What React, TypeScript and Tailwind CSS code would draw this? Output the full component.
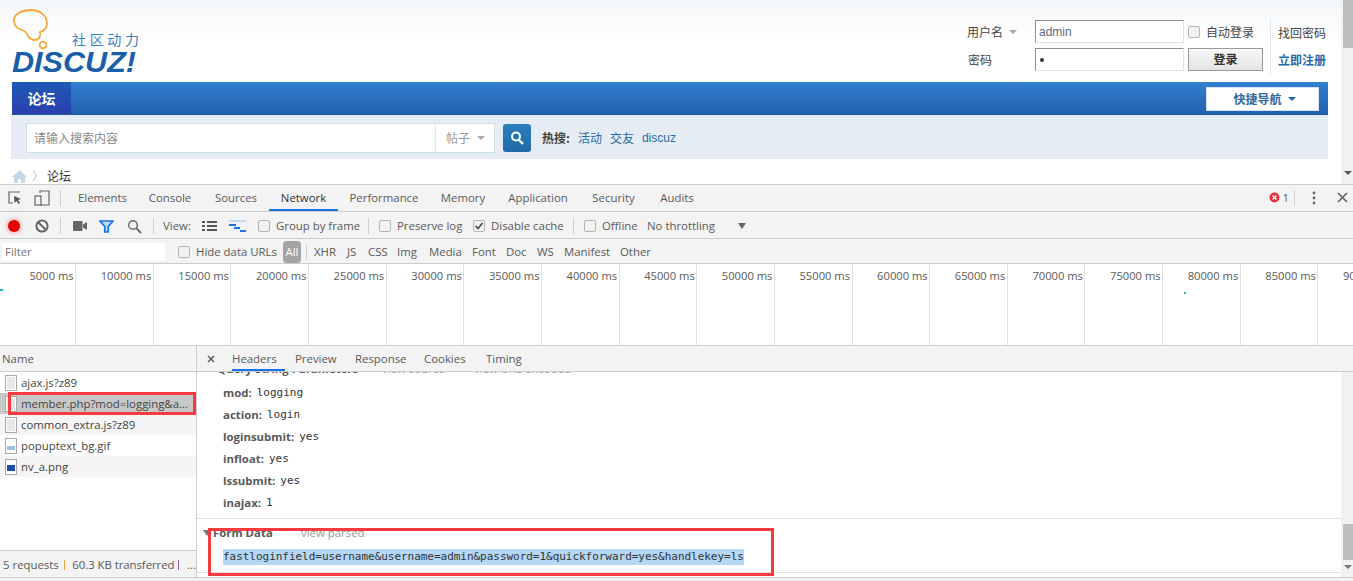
import React from "react";

const ui = "font-['Open_Sans','Noto_Sans_CJK_SC',sans-serif]";
const cjk = "font-['Noto_Sans_CJK_SC','Liberation_Sans',sans-serif]";
const mono = "font-['DejaVu_Sans_Mono',monospace]";

const panelTabs = [
  { label: "Elements", cls: "w-[69px]" },
  { label: "Console", cls: "w-[66px]" },
  { label: "Sources", cls: "w-[66px]" },
  { label: "Network", cls: "w-[69px]" },
  { label: "Performance", cls: "w-[92px]" },
  { label: "Memory", cls: "w-[66px]" },
  { label: "Application", cls: "w-[84px]" },
  { label: "Security", cls: "w-[67px]" },
  { label: "Audits", cls: "w-[60px]" },
];

const filters = [
  { label: "XHR", cls: "w-[33px]" },
  { label: "JS", cls: "w-[21px]" },
  { label: "CSS", cls: "w-[29px]" },
  { label: "Img", cls: "w-[32px]" },
  { label: "Media", cls: "w-[43px]" },
  { label: "Font", cls: "w-[34px]" },
  { label: "Doc", cls: "w-[31px]" },
  { label: "WS", cls: "w-[27px]" },
  { label: "Manifest", cls: "w-[56px]" },
  { label: "Other", cls: "w-[40px]" },
];

const ticks = [5000, 10000, 15000, 20000, 25000, 30000, 35000, 40000, 45000, 50000, 55000, 60000, 65000, 70000, 75000, 80000, 85000, 90000];

const requests = [
  { name: "ajax.js?z89", kind: "doc", cls: "bg-white" },
  { name: "member.php?mod=logging&a...", kind: "doc", cls: "bg-[#c8c8c8]" },
  { name: "common_extra.js?z89", kind: "doc", cls: "bg-[#f5f5f5]" },
  { name: "popuptext_bg.gif", kind: "gif", cls: "bg-white" },
  { name: "nv_a.png", kind: "png", cls: "bg-[#f5f5f5]" },
];

const params = [
  ["mod", "logging"],
  ["action", "login"],
  ["loginsubmit", "yes"],
  ["infloat", "yes"],
  ["lssubmit", "yes"],
  ["inajax", "1"],
];

const Logo = () => (
  <svg width="132" height="66" viewBox="0 0 132 66" className="shrink-0">
    <path
      d="M2 12C2 6 10 2 19 2C28 2 35 8 35 15C35 20 32 23 28 24C29 28 27 32 23 32C19 32 17 30 16 28C15 25 13 23 10 22C5 21 2 17 2 12z"
      fill="none"
      stroke="#f5a83c"
      strokeWidth="1.8"
    />
    <circle cx="31" cy="37" r="3.4" fill="none" stroke="#f5a83c" strokeWidth="1.8" />
    <text x="60" y="37" fontSize="14" fill="#3b80c2" textLength="67" fontFamily="Noto Sans CJK SC, sans-serif">
      社区动力
    </text>
    <text
      x="0"
      y="64"
      fontSize="29"
      fontWeight="700"
      fontStyle="italic"
      fill="#1a5ea9"
      textLength="124"
      lengthAdjust="spacingAndGlyphs"
      fontFamily="Liberation Sans, sans-serif"
    >
      DISCUZ!
    </text>
  </svg>
);

const Checkbox = ({ checked = false }: { checked?: boolean }) => (
  <span className="w-[12px] h-[12px] shrink-0 rounded-[2px] border border-[#b5b5b5] bg-[#f2f2f2] flex items-center justify-center">
    {checked && (
      <svg width="10" height="10" viewBox="0 0 10 10">
        <path d="M1.5 5l2.5 2.5L8.5 2" fill="none" stroke="#444" strokeWidth="1.6" />
      </svg>
    )}
  </span>
);

const Divider = () => <span className="block w-px h-[16px] bg-[#cfcfcf] shrink-0" />;

const FileIcon = ({ kind }: { kind: string }) => (
  <svg width="12" height="16" viewBox="0 0 12 16" className="shrink-0">
    <rect x="0.5" y="0.5" width="11" height="15" fill="#fff" stroke="#a9a9a9" />
    {kind === "doc" && <path d="M2 3h8M2 5h8M2 7h8M2 9h8M2 11h8M2 13h8" stroke="#cfcfcf" />}
    {kind === "gif" && <path d="M2 9h8M2 11h8" stroke="#3f7fc9" />}
    {kind === "png" && <rect x="2" y="6" width="8" height="6" fill="#1b4fa6" />}
  </svg>
);

const Forum = () => (
  <div className="flex-1 flex flex-col bg-gradient-to-b from-[#f3f6f8] to-white to-[40px] overflow-hidden">
    <div className="h-[82px] shrink-0 flex justify-between pl-[12px] pr-[15px]">
      <div className="pt-[8px]">
        <Logo />
      </div>
      <div className={`flex pt-[20px] text-[12px] text-[#444] ${cjk}`}>
        <div className="flex flex-col gap-[5px]">
          <div className="h-[23px] flex items-center">
            <span className="w-[51px] mr-[17px] pt-px flex items-center gap-[6px] whitespace-nowrap">
              用户名
              <span className="w-0 h-0 border-x-[4px] border-x-transparent border-t-[4px] border-t-[#aaa]" />
            </span>
            <span className="w-[149px] h-[23px] border border-[#e0e0e0] border-t-[#8f8f8f] border-l-[#8f8f8f] bg-white pl-[3px] leading-[22px] text-[#5c6a80] font-['Liberation_Sans',sans-serif]">
              admin
            </span>
            <span className="ml-[4px] mr-[6px]">
              <Checkbox />
            </span>
            <span className="w-[57px] pt-px whitespace-nowrap">自动登录</span>
          </div>
          <div className="h-[23px] flex items-center">
            <span className="w-[48px] mr-[20px] pl-px pt-px">密码</span>
            <span className="w-[149px] h-[23px] border border-[#e0e0e0] border-t-[#8f8f8f] border-l-[#8f8f8f] bg-white pl-[4px] flex items-center">
              <span className="w-[4px] h-[4px] rounded-full bg-[#334]" />
            </span>
            <span className="ml-[4px] w-[75px] h-[23px] border border-[#999] bg-gradient-to-b from-[#f8f8f8] to-[#e4e4e4] text-center leading-[20px] font-bold text-[#333]">
              登录
            </span>
          </div>
        </div>
        <div className="ml-[7px] -mt-[2px] h-[56px] border-l border-[#dfe6ee] pl-[7px] flex flex-col justify-between pt-[6px] pb-[5px]">
          <span>找回密码</span>
          <span className="font-bold text-[#2a6aa8]">立即注册</span>
        </div>
      </div>
    </div>
    <div className="h-[33px] shrink-0 ml-[12px] mr-[13px] flex items-stretch justify-between bg-gradient-to-b from-[#3280d0] to-[#2361ad] border-b border-[#1f5a9f]">
      <div className={`w-[59px] bg-gradient-to-b from-[#1c5ab4] to-[#2a3fae] text-white font-bold text-[14px] flex items-center justify-center ${cjk}`}>
        论坛
      </div>
      <div className={`w-[113px] h-[24px] mt-[5px] mr-[9px] bg-white border border-[#d5e2f0] flex items-center justify-center gap-[6px] pl-[4px] text-[12px] font-bold text-[#34689f] ${cjk}`}>
        快捷导航
        <span className="w-0 h-0 border-x-[4px] border-x-transparent border-t-[4px] border-t-[#1f6bb0]" />
      </div>
    </div>
    <div className="h-[44px] shrink-0 ml-[11px] mr-[13px] bg-[#e6ecf3] flex items-center pl-[15px] pt-[2px]">
      <div className={`w-[469px] h-[30px] bg-white border border-[#cfdfe6] flex items-center text-[12px] text-[#888] ${cjk}`}>
        <span className="w-[408px] pl-[7px]">请输入搜索内容</span>
        <span className="flex-1 h-full border-l border-[#dfe8ec] flex items-center pl-[10px] gap-[7px] text-[#999]">
          帖子
          <span className="w-0 h-0 border-x-[4px] border-x-transparent border-t-[4px] border-t-[#aaa]" />
        </span>
      </div>
      <div className="ml-[8px] w-[28px] h-[28px] rounded-[3px] bg-gradient-to-b from-[#2b80bd] to-[#1f6aa6] flex items-center justify-center">
        <svg width="16" height="16" viewBox="0 0 16 16">
          <circle cx="7" cy="6.5" r="4" fill="none" stroke="#fff" strokeWidth="2" />
          <path d="M10 10l4 4" stroke="#fff" strokeWidth="2.4" />
        </svg>
      </div>
      <div className={`ml-[11px] flex text-[12px] text-[#2a6aa8] ${cjk}`}>
        <span className="font-bold text-[#444] mr-[8px]">热搜:</span>
        <span className="mr-[8px]">活动</span>
        <span className="mr-[8px]">交友</span>
        <span className="font-['Liberation_Sans',sans-serif]">discuz</span>
      </div>
    </div>
    <div className={`flex items-center pl-[12px] pt-[9px] text-[12px] leading-[16px] text-[#333] ${cjk}`}>
      <svg width="15" height="13" viewBox="0 0 15 13">
        <path d="M7.5 0L0 7h2v6h4V9h3v4h4V7h2z" fill="#c5d6e4" />
      </svg>
      <span className="ml-[5px] mr-[3px] text-[#c5c5c5]">〉</span>
      <span>论坛</span>
    </div>
  </div>
);

const Toolbar = () => (
  <div className={`h-[27px] shrink-0 border-b border-[#cdcdcd] flex items-center pt-[2px] text-[11.4px] text-[#5a5a5a] ${ui}`}>
    <span className="ml-[8px] w-[12px] h-[12px] rounded-full bg-[#e60000] shadow-[0_0_4px_1px_#f3a0a0]" />
    <svg width="14" height="14" viewBox="0 0 14 14" className="ml-[15px]">
      <circle cx="7" cy="7" r="5.6" fill="none" stroke="#666" strokeWidth="2" />
      <path d="M3 3l8 8" stroke="#666" strokeWidth="2" />
    </svg>
    <span className="ml-[11px]">
      <Divider />
    </span>
    <svg width="14" height="10" viewBox="0 0 14 10" className="ml-[12px]">
      <rect x="0" y="0" width="9.5" height="10" rx="1" fill="#666" />
      <path d="M10 3.5L14 1v8l-4-2.5z" fill="#666" />
    </svg>
    <svg width="15" height="13" viewBox="0 0 15 13" className="ml-[12px]">
      <path d="M1 1h13L9.2 6.5V12H5.8V6.5z" fill="#bfdcf7" stroke="#1a73e8" strokeWidth="1.7" />
    </svg>
    <svg width="15" height="15" viewBox="0 0 15 15" className="ml-[13px]">
      <circle cx="6" cy="6" r="4.3" fill="none" stroke="#666" strokeWidth="1.4" />
      <path d="M9.2 9.2L14 14" stroke="#666" strokeWidth="1.8" />
    </svg>
    <span className="ml-[11px]">
      <Divider />
    </span>
    <span className="ml-[9px] w-[39px]">View:</span>
    <svg width="15" height="10" viewBox="0 0 15 10">
      <path d="M0 1h3M5 1h10M0 5h3M5 5h10M0 9h3M5 9h10" stroke="#555" strokeWidth="2" />
    </svg>
    <svg width="17" height="12" viewBox="0 0 17 12" className="ml-[12px]">
      <path d="M0 1h17" stroke="#c3d9f3" strokeWidth="2" />
      <path d="M0 5h7M5 8h6M11 11h6" stroke="#1a73e8" strokeWidth="2" />
    </svg>
    <span className="ml-[12px] mr-[6px]">
      <Checkbox />
    </span>
    <span className="w-[92px] whitespace-nowrap">Group by frame</span>
    <Divider />
    <span className="ml-[10px] mr-[6px]">
      <Checkbox />
    </span>
    <span className="w-[76px] whitespace-nowrap">Preserve log</span>
    <Checkbox checked />
    <span className="ml-[6px] w-[82px] whitespace-nowrap">Disable cache</span>
    <Divider />
    <span className="ml-[10px] mr-[6px]">
      <Checkbox />
    </span>
    <span className="w-[45px]">Offline</span>
    <span className="w-[91px] whitespace-nowrap">No throttling</span>
    <span className="w-0 h-0 border-x-[4px] border-x-transparent border-t-[6px] border-t-[#666]" />
  </div>
);

const FilterBar = () => (
  <div className={`h-[25px] shrink-0 border-b border-[#cdcdcd] flex items-center pt-[2px] text-[11.4px] text-[#5a5a5a] ${ui}`}>
    <span className="ml-[2px] w-[163px] h-[18px] bg-white pl-[3px] leading-[18px] text-[#777]">Filter</span>
    <span className="ml-[13px] mr-[6px]">
      <Checkbox />
    </span>
    <span className="w-[87px] whitespace-nowrap">Hide data URLs</span>
    <span className="w-[18px] h-[22px] rounded-[4px] bg-[#a3a3a3] text-white text-center leading-[22px]">All</span>
    <span className="ml-[5px] mr-[7px]">
      <Divider />
    </span>
    {filters.map((f) => (
      <span key={f.label} className={f.cls}>
        {f.label}
      </span>
    ))}
  </div>
);

const Timeline = () => (
  <div className={`relative h-[82px] shrink-0 bg-white border-b border-[#cdcdcd] flex overflow-hidden text-[11.2px] text-[#5a5a5a] ${ui}`}>
    <div className="flex -ml-[1.5px]">
      {ticks.map((t) => (
        <div key={t} className="w-[77.65px] shrink-0 border-r border-[#e0e0e0] text-right pr-[1.5px] pt-[4px] whitespace-nowrap">
          {t} ms
        </div>
      ))}
    </div>
    <span className="absolute left-0 top-[25px] w-[3px] h-[2px] bg-[#1fb0d8]" />
    <span className="absolute left-[1184px] top-[28px] w-[2px] h-[2px] bg-[#1fb8c0]" />
  </div>
);

const RequestList = () => (
  <div className={`w-[197px] shrink-0 border-r border-[#cdcdcd] flex flex-col text-[11.4px] text-[#444] ${ui}`}>
    <div className="h-[26px] shrink-0 bg-[#f3f3f3] border-b border-[#cdcdcd] pl-[2px] leading-[25px] text-[#5a5a5a]">Name</div>
    <div className="flex-1 bg-white">
      {requests.map((r) => (
        <div key={r.name} className={`h-[21px] flex items-center pl-[5px] gap-[4px] whitespace-nowrap ${r.cls}`}>
          <FileIcon kind={r.kind} />
          <span>{r.name}</span>
        </div>
      ))}
    </div>
    <div className="h-[27px] shrink-0 bg-[#f3f3f3] border-t border-[#cdcdcd] flex items-center pl-[3px] pt-[2px] text-[#5a5a5a] whitespace-nowrap">
      <span className="w-[62px]">5 requests</span>
      <span className="w-px h-[10px] bg-[#e8a23c] mr-[7px]" />
      <span className="w-[107px] tracking-[-0.05px]">60.3 KB transferred</span>
      <span className="w-px h-[10px] bg-[#9a5aa8] mr-[8px]" />
      <span>...</span>
    </div>
  </div>
);

const Details = () => (
  <div className={`flex-1 flex flex-col bg-white text-[11.4px] text-[#5a5a5a] min-w-0 ${ui}`}>
    <div className="h-[26px] shrink-0 bg-[#f3f3f3] border-b border-[#cdcdcd] flex items-center">
      <svg width="8" height="8" viewBox="0 0 8 8" className="ml-[10px] mr-[17px]">
        <path d="M1 1l6 6M7 1l-6 6" stroke="#555" strokeWidth="1.4" />
      </svg>
      <span className="w-[63px] h-full leading-[25px] relative">
        Headers
        <span className="absolute left-0 bottom-0 w-[53px] h-[2px] bg-[#1a73e8]" />
      </span>
      <span className="w-[60px]">Preview</span>
      <span className="w-[69px]">Response</span>
      <span className="w-[62px]">Cookies</span>
      <span>Timing</span>
    </div>
    <div className="flex-1 flex min-h-0">
      <div className="flex-1 flex flex-col overflow-hidden">
        <div className="h-[147px] shrink-0 border-b border-[#e0e0e0] overflow-hidden">
          <div className="-mt-[14px] pl-[20px] h-[22px] flex items-center font-bold whitespace-nowrap">
            <span className="w-[165px]">Query String Parameters</span>
            <span className="w-[92px] font-normal text-[#999]">view source</span>
            <span className="font-normal text-[#999]">view URL encoded</span>
          </div>
          <div className="pt-[2px] pl-[26px]">
            {params.map(([k, v]) => (
              <div key={k} className="h-[22px] flex items-center whitespace-nowrap">
                <span className="font-bold mr-[5px]">{k}:</span>
                <span className={`text-[11px] text-[#333] ${mono}`}>{v}</span>
              </div>
            ))}
          </div>
        </div>
        <div className="h-[54px] shrink-0 border-b border-[#e0e0e0]">
          <div className="h-[28px] flex items-center pl-[6px]">
            <span className="w-0 h-0 border-x-[4px] border-x-transparent border-t-[6px] border-t-[#777] mr-[2px]" />
            <span className="font-bold w-[88px]">Form Data</span>
            <span className="text-[#999]">view parsed</span>
          </div>
          <div className="pl-[26px] mt-[2px] h-[16px] flex">
            <span className={`bg-[#b4d7f6] text-[11px] leading-[16px] tracking-[-0.03px] text-[#333] whitespace-nowrap ${mono}`}>
              fastloginfield=username&amp;username=admin&amp;password=1&amp;quickforward=yes&amp;handlekey=ls
            </span>
          </div>
        </div>
        <div className="flex-1" />
      </div>
      <div className="w-[12px] shrink-0 bg-[#f1f1f1] flex flex-col items-end pt-[152px]">
        <span className="w-[10px] h-[36px] bg-[#bdbdbd]" />
        <span className="mt-[5px] mr-[1px] w-0 h-0 border-x-[4px] border-x-transparent border-t-[4px] border-t-[#777]" />
      </div>
    </div>
  </div>
);

export default function App() {
  return (
    <div className="relative w-[1353px] h-[581px] overflow-hidden bg-[#f3f3f3] flex flex-col">
      <div className="h-[184px] shrink-0 flex">
        <Forum />
        <div className="w-[12px] shrink-0 bg-[#f1f1f1] flex flex-col items-end">
          <span className="w-[10px] h-[48px] bg-[#bdbdbd]" />
          <span className="mt-[123px] mr-[1px] w-0 h-0 border-x-[4px] border-x-transparent border-t-[4px] border-t-[#555]" />
        </div>
      </div>
      <div className={`h-[28px] shrink-0 border-y border-[#cdcdcd] flex items-center text-[11.4px] text-[#5a5a5a] ${ui}`}>
        <svg width="14" height="14" viewBox="0 0 14 14" className="ml-[8px]">
          <path d="M12 1H1v11h4" fill="none" stroke="#666" strokeWidth="1.2" />
          <path d="M6 5l7 3-3 1 2 3-1.5 1-2-3-2 2z" fill="#555" />
        </svg>
        <svg width="16" height="16" viewBox="0 0 16 16" className="ml-[12px]">
          <path d="M6 3V1h9v14H6" fill="none" stroke="#666" strokeWidth="1.2" />
          <rect x="1" y="6" width="6" height="9" fill="none" stroke="#666" strokeWidth="1.2" />
        </svg>
        <span className="ml-[10px] mr-[7px]">
          <Divider />
        </span>
        {panelTabs.map((t) => (
          <span
            key={t.label}
            className={`h-full pt-[2px] flex items-center justify-center whitespace-nowrap border-b-2 ${t.cls} ${
              t.label === "Network" ? "border-[#1a73e8] text-[#333]" : "border-transparent"
            }`}
          >
            {t.label}
          </span>
        ))}
        <span className="ml-auto flex items-center">
          <svg width="11" height="11" viewBox="0 0 11 11">
            <circle cx="5.5" cy="5.5" r="5" fill="#e8303a" />
            <path d="M3.5 3.5l4 4M7.5 3.5l-4 4" stroke="#fff" strokeWidth="1.3" />
          </svg>
          <span className="ml-[2px] mr-[5px]">1</span>
          <Divider />
          <svg width="4" height="14" viewBox="0 0 4 14" className="ml-[17px]">
            <circle cx="2" cy="2" r="1.4" fill="#666" />
            <circle cx="2" cy="7" r="1.4" fill="#666" />
            <circle cx="2" cy="12" r="1.4" fill="#666" />
          </svg>
          <svg width="11" height="11" viewBox="0 0 11 11" className="ml-[21px] mr-[5px]">
            <path d="M1 1l9 9M10 1l-9 9" stroke="#666" strokeWidth="1.7" />
          </svg>
        </span>
      </div>
      <Toolbar />
      <FilterBar />
      <Timeline />
      <div className="h-[232px] shrink-0 flex border-b border-[#cdcdcd]">
        <RequestList />
        <Details />
      </div>
      {/* red annotation boxes drawn over the capture */}
      <div className="absolute left-[8px] top-[392px] w-[188px] h-[23px] border-[3px] border-[#f53b3f]" />
      <div className="absolute left-[208px] top-[528px] w-[566px] h-[48px] border-[3px] border-[#f53b3f]" />
    </div>
  );
}
